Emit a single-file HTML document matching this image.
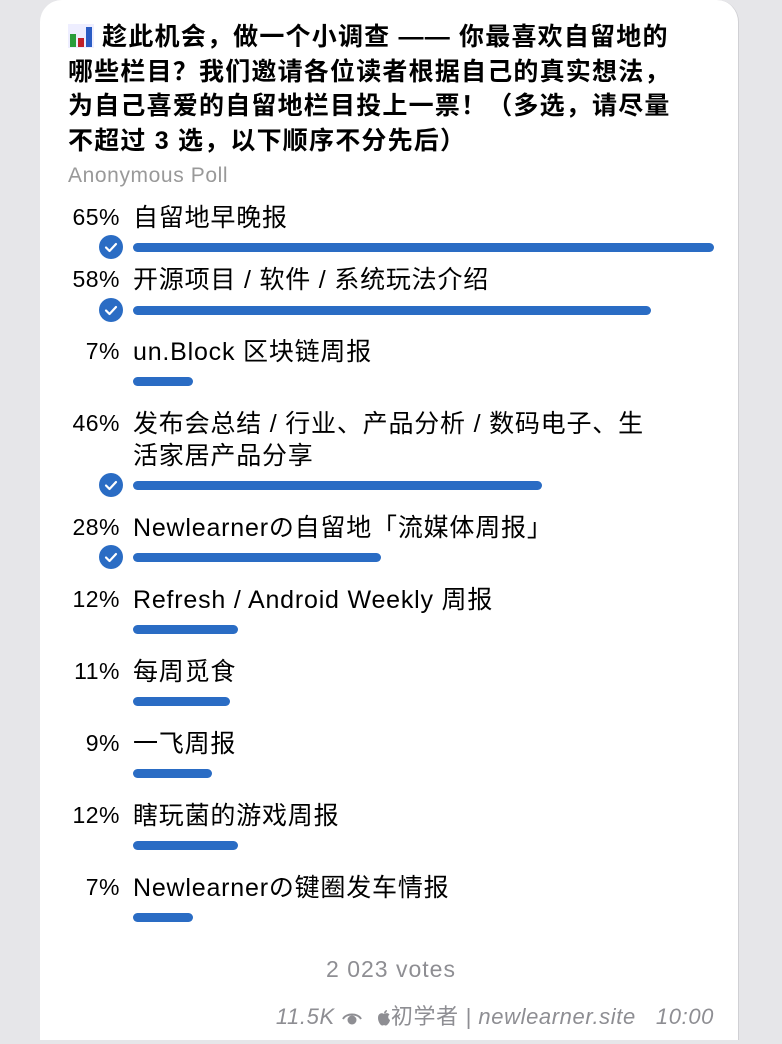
<!DOCTYPE html>
<html><head><meta charset="utf-8">
<style>
html,body{margin:0;padding:0;}
body{width:782px;height:1044px;background:#e6e6e9;position:relative;overflow:hidden;font-family:"Liberation Sans","Noto Sans CJK SC",sans-serif;}
.card{position:absolute;left:40px;top:0;width:698px;height:1040px;background:#fff;border-radius:22px 22px 0 0;border-right:1px solid #d0d0d4;}
.q{position:absolute;left:68px;top:20px;width:700px;font-size:25px;line-height:34.5px;color:#000;font-weight:600;letter-spacing:1.2px;white-space:nowrap;font-family:"Liberation Sans","Noto Sans CJK SC",sans-serif;}
.anon{position:absolute;left:68px;top:164px;font-size:21px;color:#999;letter-spacing:0.6px;}
.pct{position:absolute;right:662px;font-size:23px;color:#000;text-align:right;letter-spacing:0.5px;}
.lbl{position:absolute;left:133px;font-size:25px;line-height:32px;color:#000;letter-spacing:0.8px;white-space:nowrap;}
.bar{position:absolute;left:133px;height:9px;border-radius:5px;background:#2a6cc4;}
.chk{position:absolute;left:99px;width:24px;height:24px;border-radius:50%;background:#2a6cc4;}
.votes{position:absolute;left:0;width:782px;text-align:center;top:956px;font-size:23px;color:#8e8e93;letter-spacing:1px;}
.foot{position:absolute;right:68px;top:999px;font-size:22px;color:#8e8e93;font-style:italic;white-space:nowrap;letter-spacing:0.6px;}
</style></head><body>
<div class="card"></div>
<div class="q"><svg width="26" height="24" viewBox="0 0 26 24" style="vertical-align:-3px"><rect x="0" y="0" width="26" height="24" fill="#eef"/><rect x="2" y="10" width="6" height="13" fill="#2a9d3a"/><rect x="10" y="14" width="6" height="9" fill="#c0202a"/><rect x="18" y="3" width="6" height="20" fill="#2a5cc4"/></svg> 趁此机会，做一个小调查 —— 你最喜欢自留地的<br>哪些栏目？我们邀请各位读者根据自己的真实想法，<br>为自己喜爱的自留地栏目投上一票！（多选，请尽量<br>不超过 3 选，以下顺序不分先后）</div>
<div class="anon">Anonymous Poll</div>

<div class="pct" style="top:204px">65%</div><div class="lbl" style="top:202px">自留地早晚报</div>
<div class="chk" style="top:235px"><svg width="24" height="24"><path d="M7 12.5l3.5 3.5 6.5-7" stroke="#fff" stroke-width="2.2" fill="none" stroke-linecap="round" stroke-linejoin="round"/></svg></div>
<div class="bar" style="top:243px;width:581px"></div>

<div class="pct" style="top:266px">58%</div><div class="lbl" style="top:264px">开源项目 / 软件 / 系统玩法介绍</div>
<div class="chk" style="top:298px"><svg width="24" height="24"><path d="M7 12.5l3.5 3.5 6.5-7" stroke="#fff" stroke-width="2.2" fill="none" stroke-linecap="round" stroke-linejoin="round"/></svg></div>
<div class="bar" style="top:306px;width:518px"></div>

<div class="pct" style="top:338px">7%</div><div class="lbl" style="top:336px">un.Block 区块链周报</div>
<div class="bar" style="top:377px;width:60px"></div>

<div class="pct" style="top:410px">46%</div><div class="lbl" style="top:408px">发布会总结 / 行业、产品分析 / 数码电子、生<br>活家居产品分享</div>
<div class="chk" style="top:473px"><svg width="24" height="24"><path d="M7 12.5l3.5 3.5 6.5-7" stroke="#fff" stroke-width="2.2" fill="none" stroke-linecap="round" stroke-linejoin="round"/></svg></div>
<div class="bar" style="top:481px;width:409px"></div>

<div class="pct" style="top:514px">28%</div><div class="lbl" style="top:512px">Newlearnerの自留地「流媒体周报」</div>
<div class="chk" style="top:545px"><svg width="24" height="24"><path d="M7 12.5l3.5 3.5 6.5-7" stroke="#fff" stroke-width="2.2" fill="none" stroke-linecap="round" stroke-linejoin="round"/></svg></div>
<div class="bar" style="top:553px;width:248px"></div>

<div class="pct" style="top:586px">12%</div><div class="lbl" style="top:584px">Refresh / Android Weekly 周报</div>
<div class="bar" style="top:625px;width:105px"></div>

<div class="pct" style="top:658px">11%</div><div class="lbl" style="top:656px">每周觅食</div>
<div class="bar" style="top:697px;width:97px"></div>

<div class="pct" style="top:730px">9%</div><div class="lbl" style="top:728px">一飞周报</div>
<div class="bar" style="top:769px;width:79px"></div>

<div class="pct" style="top:802px">12%</div><div class="lbl" style="top:800px">瞎玩菌的游戏周报</div>
<div class="bar" style="top:841px;width:105px"></div>

<div class="pct" style="top:874px">7%</div><div class="lbl" style="top:872px">Newlearnerの键圈发车情报</div>
<div class="bar" style="top:913px;width:60px"></div>

<div class="votes">2 023 votes</div>
<div class="foot">11.5K <svg width="22" height="16" viewBox="0 0 22 16" style="vertical-align:-2px"><path d="M2 9C5 3 17 3 20 9" stroke="#8e8e93" stroke-width="2" fill="none"/><circle cx="11" cy="10" r="4.5" fill="#8e8e93"/></svg> &nbsp;<svg width="14" height="17" viewBox="0 0 14 17" style="vertical-align:-2px"><path d="M7 5C5 3.5 1 4 1 9c0 4 3 8 4.5 7.5S7 16 8.5 16.5 13 13 13 11c-2-1-2.5-4-.5-5.5C11 3.5 9 4 7 5z" fill="#8e8e93"/><path d="M7 4.5C7 2.5 8.5 1 10 1c0 2-1.5 3.5-3 3.5z" fill="#8e8e93"/></svg><span style="font-style:normal">初学者</span> | newlearner.site &nbsp; 10:00</div>
</body></html>
